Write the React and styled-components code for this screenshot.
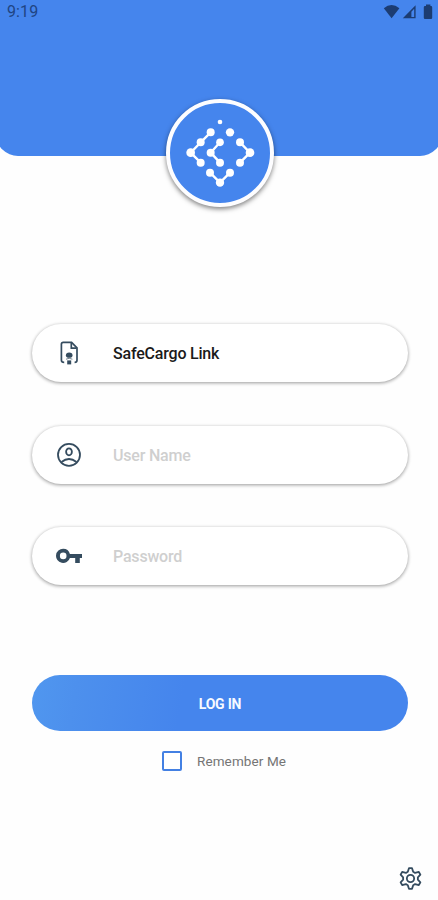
import React, { useState } from "react";
import styled, { createGlobalStyle } from "styled-components";

const GlobalStyle = createGlobalStyle`
  * {
    box-sizing: border-box;
  }
  body {
    margin: 0;
    background: #fefefe;
    font-family: Roboto, "Liberation Sans", sans-serif;
    overflow: hidden;
  }
`;

const Screen = styled.div`
  width: 438px;
  height: 900px;
  display: flex;
  flex-direction: column;
  overflow: hidden;
`;

const Header = styled.header`
  flex: none;
  height: 156px;
  margin: 0 -4px;
  padding: 0 9px 0 11px;
  background: #4585ed;
  border-radius: 0 0 22px 22px;
`;

const StatusBar = styled.div`
  height: 23px;
  display: flex;
  align-items: center;
  justify-content: space-between;
  color: #1f4482;
  font-size: 16px;
  letter-spacing: 0.1px;
  svg {
    display: block;
  }
`;

const Logo = styled.div`
  flex: none;
  position: relative;
  width: 108px;
  height: 108px;
  margin: -57px 0 0 166px;
  border: 4px solid #fdfdff;
  border-radius: 50%;
  background: #4585ed;
  box-shadow: 0 2px 5px rgba(0, 0, 0, 0.5);
  svg {
    display: block;
  }
`;

const Form = styled.form`
  display: flex;
  flex-direction: column;
  margin: 117px 30px 0 32px;
`;

const Field = styled.label`
  height: 58px;
  display: flex;
  align-items: center;
  margin-bottom: ${(props) => props.$gap}px;
  padding-left: 24px;
  border-radius: 29px;
  background: #fff;
  box-shadow: 0 1px 3px 1px rgba(0, 0, 0, 0.24), 0 1px 1px rgba(0, 0, 0, 0.06);
  svg {
    flex: none;
    width: 26px;
    height: 26px;
  }
`;

const Input = styled.input`
  width: 260px;
  margin-left: 31px;
  padding: 0;
  border: 0;
  outline: 0;
  background: none;
  color: #1a1a1a;
  font: 500 16px Roboto, "Liberation Sans", sans-serif;
  letter-spacing: -0.2px;
  &::placeholder {
    color: #cfcfcf;
    opacity: 1;
  }
`;

const LoginButton = styled.button`
  height: 56px;
  padding: 0;
  border: 0;
  border-radius: 28px;
  background: linear-gradient(100deg, #5097ef 0%, #4d90ed 12%, #4585ed 40%);
  color: #f7faff;
  font: 700 14px/58px Roboto, "Liberation Sans", sans-serif;
  letter-spacing: -0.2px;
`;

const Remember = styled.label`
  display: flex;
  align-items: center;
  margin: 20px 0 0 130px;
  color: #757575;
  font-size: 13.5px;
  letter-spacing: 0.1px;
`;

const Checkbox = styled.input`
  appearance: none;
  width: 20px;
  height: 20px;
  margin: 0 15px 0 0;
  border: 2px solid #4380e3;
  border-radius: 2px;
  background: #fff;
  &:checked {
    background: #4380e3;
  }
`;

const Footer = styled.footer`
  display: flex;
  justify-content: flex-end;
  margin-top: auto;
  padding: 0 16px 10px 0;
  svg {
    display: block;
  }
`;

const ink = "#354c5f";

const links = [
  "181,142 151,172 121,203 151,233",
  "209,172 181,203 209,233",
  "269,172 299,203 269,233",
  "179,263 209,293 239,263",
];

const dots = [
  [209, 111, 7],
  [181, 142, 12],
  [239, 142, 12.5],
  [151, 172, 12],
  [121, 203, 13],
  [151, 233, 12],
  [209, 172, 11.5],
  [181, 203, 12],
  [209, 233, 12],
  [269, 172, 12],
  [299, 203, 13],
  [269, 233, 12],
  [179, 263, 12],
  [239, 263, 12],
  [209, 293, 12.5],
];

function LogoMark() {
  return (
    <svg width="100" height="100" viewBox="59 54 300 300">
      {links.map((points) => (
        <polyline key={points} points={points} fill="none" stroke="#fff" strokeWidth="7" />
      ))}
      {dots.map(([x, y, r]) => (
        <circle key={`${x}-${y}`} cx={x} cy={y} r={r} fill="#fff" />
      ))}
    </svg>
  );
}

function StatusIcons() {
  return (
    <svg width="50" height="16" viewBox="383 3 50 16" fill="#1c3c72">
      <path d="M383.8 7.2 Q391.5 1 399.4 7.2 L391.6 17.2 Z" />
      <path d="M402.8 17.3 L415.6 4.2 V17.3 Z M411.4 10.8 V16 H414.2 V7.7 Z" fillRule="evenodd" />
      <path d="M426 5 V3.5 H430.4 V5 H431 Q432.2 5 432.2 6.2 V16.8 Q432.2 18 431 18 H425 Q423.8 18 423.8 16.8 V6.2 Q423.8 5 425 5 Z" />
    </svg>
  );
}

function DocumentIcon() {
  return (
    <svg viewBox="0 0 26 26" fill="none" stroke={ink} strokeWidth="1.7">
      <path d="M8.2 22.3 Q5.4 22.3 5.4 20.2 V4.2 Q5.4 2.4 7.2 2.4 H15.6 L21 7.8 V20.2 Q21 22.3 18.6 22.3" />
      <path d="M15.3 2.8 V8.2 H20.6" />
      <ellipse cx="13.2" cy="15.2" rx="3.3" ry="2.6" fill={ink} stroke="none" />
      <path d="M11.2 20.4 H15.2 V24.4 H11.2 Z" fill={ink} stroke="none" />
      <path d="M10 19.2 Q13.2 17.4 16.4 19.2" strokeWidth="0.7" />
    </svg>
  );
}

function UserIcon() {
  return (
    <svg viewBox="0 0 26 26" fill="none" stroke={ink} strokeWidth="1.8">
      <circle cx="13" cy="12.8" r="11" />
      <ellipse cx="13" cy="9.8" rx="2.9" ry="3.5" />
      <path d="M5.5 20 Q13 14 20.5 20" />
    </svg>
  );
}

function KeyIcon() {
  return (
    <svg viewBox="0 0 26 26" fill={ink}>
      <path
        fillRule="evenodd"
        d="M7.2 5.8 A7.1 7.1 0 1 0 13.9 15 H19.2 V20 H23.8 V15 H26 V11 H13.9 A7.1 7.1 0 0 0 7.2 5.8 Z M7.2 9.6 A3.3 3.3 0 1 1 7.2 16.2 A3.3 3.3 0 1 1 7.2 9.6 Z"
      />
    </svg>
  );
}

function GearIcon() {
  return (
    <svg width="23" height="23" viewBox="0 0 24 24" fill="none" stroke={ink} strokeWidth="1.9" strokeLinejoin="round">
      <path d="M10.4 1.2 H13.6 L14.8 5 L16.8 6.2 L20.7 5.2 L22.3 8 L19.7 10.8 V13.2 L22.3 16 L20.7 18.8 L16.8 17.8 L14.8 19 L13.6 22.8 H10.4 L9.2 19 L7.2 17.8 L3.3 18.8 L1.7 16 L4.3 13.2 V10.8 L1.7 8 L3.3 5.2 L7.2 6.2 L9.2 5 Z" />
      <circle cx="12" cy="12" r="3.8" />
    </svg>
  );
}

function App() {
  const [company, setCompany] = useState("SafeCargo Link");
  const [remember, setRemember] = useState(false);

  return (
    <Screen>
      <GlobalStyle />
      <Header>
        <StatusBar>
          <span>9:19</span>
          <StatusIcons />
        </StatusBar>
      </Header>
      <Logo>
        <LogoMark />
      </Logo>
      <Form onSubmit={(e) => e.preventDefault()}>
        <Field $gap={44}>
          <DocumentIcon />
          <Input value={company} onChange={(e) => setCompany(e.target.value)} />
        </Field>
        <Field $gap={43}>
          <UserIcon />
          <Input placeholder="User Name" />
        </Field>
        <Field $gap={90}>
          <KeyIcon />
          <Input type="password" placeholder="Password" />
        </Field>
        <LoginButton>LOG IN</LoginButton>
        <Remember>
          <Checkbox type="checkbox" checked={remember} onChange={(e) => setRemember(e.target.checked)} />
          Remember Me
        </Remember>
      </Form>
      <Footer>
        <GearIcon />
      </Footer>
    </Screen>
  );
}

export default App;
